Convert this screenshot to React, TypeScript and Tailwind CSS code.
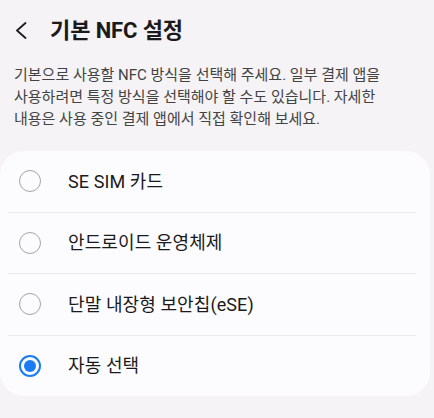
const options = [
  { label: "SE SIM 카드", checked: false },
  { label: "안드로이드 운영체제", checked: false },
  { label: "단말 내장형 보안칩(eSE)", checked: false },
  { label: "자동 선택", checked: true },
];

function Radio({ checked }: { checked: boolean }) {
  if (checked) {
    return (
      <span className="flex h-[22px] w-[22px] items-center justify-center rounded-full border-2 border-[#1a7cf5]">
        <span className="h-[12px] w-[12px] rounded-full bg-[#1a7cf5]" />
      </span>
    );
  }
  return <span className="h-[22px] w-[22px] rounded-full border-[1.5px] border-[#a4a4a6]" />;
}

export default function App() {
  return (
    <div
      className="h-[418px] w-[434px] overflow-hidden bg-[#f5f3f6] text-[#1a1a1a]"
      style={{ fontFamily: "Roboto, 'Noto Sans CJK KR', sans-serif" }}
    >
      <div className="flex h-[60px] items-center pl-[15px]">
        <svg width="12" height="17" viewBox="0 0 12 17" fill="none" stroke="#1d1d1d" strokeWidth="1.8" strokeLinecap="round" strokeLinejoin="round">
          <path d="M10.5 1 L2 8.5 L10.5 16" />
        </svg>
        <h1 className="ml-[23px] text-[22px] font-bold tracking-[-0.1px]">기본 NFC 설정</h1>
      </div>

      <p className="px-[14px] pt-[4px] text-[15px] leading-[22px] text-[#434343]">
        기본으로 사용할 NFC 방식을 선택해 주세요. 일부 결제 앱을
        <br />
        사용하려면 특정 방식을 선택해야 할 수도 있습니다. 자세한
        <br />
        내용은 사용 중인 결제 앱에서 직접 확인해 보세요.
      </p>

      <div className="mt-[21px] w-[430px] rounded-[24px] bg-[#fcfcfe]">
        {options.map((o, i) => (
          <div key={o.label}>
            <div className="flex h-[60.5px] items-center pl-[19px]">
              <Radio checked={o.checked} />
              <span className="ml-[27px] text-[18px] tracking-[0.1px]">{o.label}</span>
            </div>
            {i < options.length - 1 && <div className="ml-[8px] w-[408px] border-t border-[#ebeaec]" />}
          </div>
        ))}
      </div>
    </div>
  );
}
